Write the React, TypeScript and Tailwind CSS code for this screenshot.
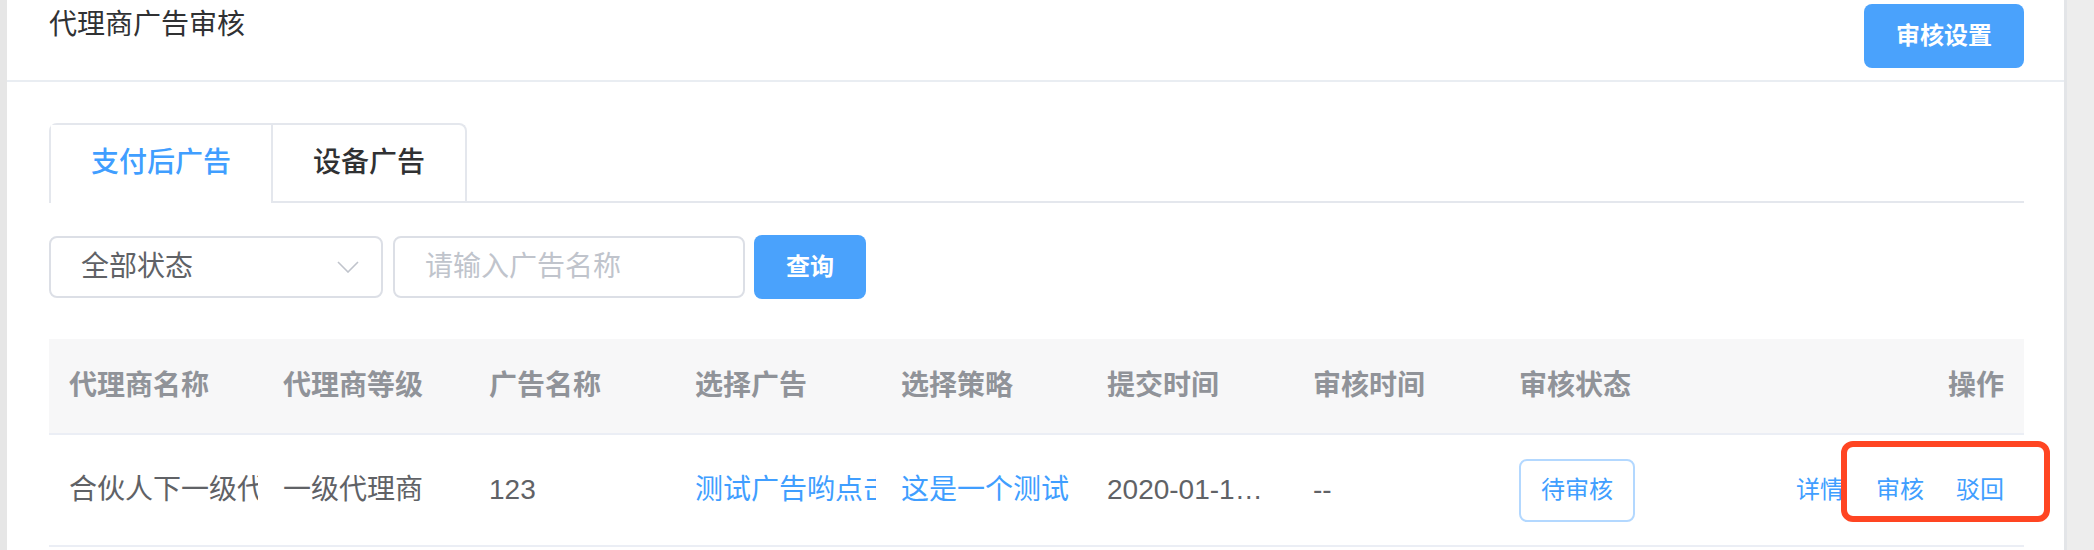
import React from "react";

const FONT = "font-['Liberation_Sans','Noto_Sans_CJK_SC',sans-serif]";

function Chevron() {
  return (
    <svg width="22" height="12" viewBox="0 0 22 12" fill="none">
      <path d="M1 1 L11 11 L21 1" stroke="#c0c4cc" strokeWidth="1.6" />
    </svg>
  );
}

export default function App() {
  return (
    <div className={`w-[2094px] h-[550px] bg-[#ededed] overflow-hidden flex ${FONT}`}>
      <div className="w-[7px] shrink-0 bg-[#e6e6e6]" />
      <div className="w-[2057px] shrink-0 bg-white flex flex-col">
        {/* header */}
        <div className="h-[82px] shrink-0 border-b-2 border-[#e9edf2] flex justify-between items-start pl-[42px] pr-[40px]">
          <div className="mt-[5px] text-[28px] leading-[40px] text-[#303133]">代理商广告审核</div>
          <button className="mt-[4px] h-[64px] w-[160px] rounded-[8px] bg-[#4aa2fc] text-white text-[24px] font-semibold">
            审核设置
          </button>
        </div>

        {/* body */}
        <div className="pl-[42px] pr-[40px] pt-[41px] flex flex-col">
          {/* tabs */}
          <div className="h-[80px] border-b-2 border-[#e4e7ed] flex">
            <div className="flex h-[80px] border-2 border-b-0 border-[#e4e7ed] rounded-t-[8px]">
              <div className="h-[78px] px-[40px] bg-white border-b-2 border-white text-[28px] leading-[76px] font-medium text-[#409eff]">
                支付后广告
              </div>
              <div className="h-[78px] px-[40px] border-l-2 border-[#e4e7ed] text-[28px] leading-[76px] font-medium text-[#303133]">
                设备广告
              </div>
            </div>
          </div>

          {/* filters */}
          <div className="mt-[32px] flex items-center h-[63px]">
            <div className="w-[334px] h-[62px] border-2 border-[#dcdfe6] rounded-[8px] flex items-center justify-between pl-[30px] pr-[22px]">
              <span className="text-[28px] text-[#606266]">全部状态</span>
              <Chevron />
            </div>
            <div className="ml-[10px] w-[352px] h-[62px] border-2 border-[#dcdfe6] rounded-[8px] flex items-center pl-[30px]">
              <span className="text-[28px] text-[#c0c4cc]">请输入广告名称</span>
            </div>
            <button className="ml-[9px] w-[112px] h-[64px] rounded-[8px] bg-[#4aa2fc] text-white text-[24px] font-semibold">
              查询
            </button>
          </div>

          {/* table */}
          <div className="mt-[41px] flex flex-col">
            <div className="grid grid-cols-[214px_206px_206px_206px_206px_206px_206px_206px_1fr] h-[96px] bg-[#f7f7f8] border-b-2 border-[#ebeef5] text-[28px] font-semibold text-[#909399]">
              {["代理商名称", "代理商等级", "广告名称", "选择广告", "选择策略", "提交时间", "审核时间", "审核状态"].map((t) => (
                <div key={t} className="flex items-center pl-[20px] whitespace-nowrap overflow-hidden">
                  {t}
                </div>
              ))}
              <div className="flex items-center justify-end pr-[20px]">操作</div>
            </div>

            <div className="grid grid-cols-[214px_206px_206px_206px_206px_206px_206px_206px_1fr] h-[112px] border-b-2 border-[#ebeef5] text-[28px] text-[#606266]">
              <div className="flex items-center pl-[20px] pr-[5px] overflow-hidden whitespace-nowrap">
                <span className="block overflow-hidden">合伙人下一级代</span>
              </div>
              <div className="flex items-center pl-[20px] pr-[5px] overflow-hidden whitespace-nowrap">一级代理商</div>
              <div className="flex items-center pl-[20px] pr-[5px] overflow-hidden whitespace-nowrap">123</div>
              <div className="flex items-center pl-[20px] pr-[5px] overflow-hidden whitespace-nowrap text-[#409eff]">
                <span className="block overflow-hidden">测试广告哟点击</span>
              </div>
              <div className="flex items-center pl-[20px] pr-[5px] overflow-hidden whitespace-nowrap text-[#409eff]">这是一个测试</div>
              <div className="flex items-center pl-[20px] pr-[5px] overflow-hidden whitespace-nowrap">
                <span className="block w-[165px] truncate">2020-01-15 10:20:30</span>
              </div>
              <div className="flex items-center pl-[20px] pr-[5px] whitespace-nowrap">--</div>
              <div className="flex items-center pl-[20px] pr-[5px] whitespace-nowrap">
                <span className="h-[63px] px-[20px] border-2 border-[#b3d8ff] rounded-[8px] bg-white flex items-center text-[24px] text-[#409eff]">
                  待审核
                </span>
              </div>
              <div className="relative flex items-center justify-end gap-[32px] pr-[20px] text-[24px] text-[#409eff] whitespace-nowrap">
                <span>详情</span>
                <span>审核</span>
                <span>驳回</span>
                <div className="absolute left-[136px] top-[6px] w-[209px] h-[81px] border-[6px] border-[#ff4522] rounded-[12px] pointer-events-none" />
              </div>
            </div>
          </div>
        </div>
      </div>
      <div className="w-[3px] shrink-0 bg-[#e3e5e8]" />
    </div>
  );
}
